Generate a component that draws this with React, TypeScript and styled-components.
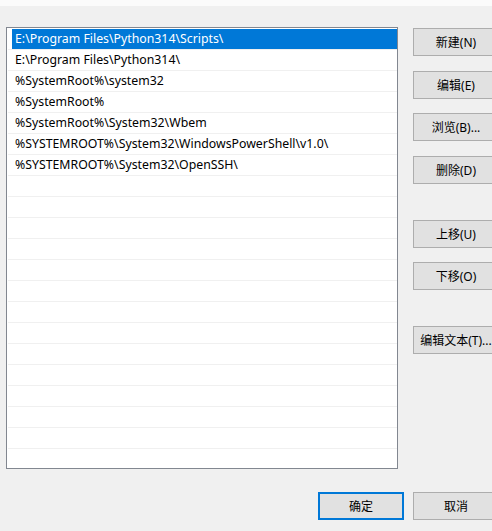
import styled, { createGlobalStyle } from "styled-components";

const paths = [
  "E:\\Program Files\\Python314\\Scripts\\",
  "E:\\Program Files\\Python314\\",
  "%SystemRoot%\\system32",
  "%SystemRoot%",
  "%SystemRoot%\\System32\\Wbem",
  "%SYSTEMROOT%\\System32\\WindowsPowerShell\\v1.0\\",
  "%SYSTEMROOT%\\System32\\OpenSSH\\",
];

const ROW_COUNT = 22;

const sideButtons = [
  { label: "新建(N)", gap: 0 },
  { label: "编辑(E)", gap: 15 },
  { label: "浏览(B)...", gap: 14 },
  { label: "删除(D)", gap: 15 },
  { label: "上移(U)", gap: 36 },
  { label: "下移(O)", gap: 14 },
  { label: "编辑文本(T)...", gap: 36 },
];

export default function App() {
  const rows = Array.from({ length: ROW_COUNT }, (_, i) => paths[i] ?? "");

  return (
    <>
      <GlobalStyle />
      <Dialog>
        <TopStrip />
        <Body>
          <ListBox>
            {rows.map((text, i) => (
              <Row key={i}>
                <Cell $selected={i === 0}>{text}</Cell>
              </Row>
            ))}
          </ListBox>
          <ButtonColumn>
            {sideButtons.map((b) => (
              <DialogButton key={b.label} $gap={b.gap}>
                {b.label}
              </DialogButton>
            ))}
          </ButtonColumn>
        </Body>
        <Footer>
          <DialogButton $default>确定</DialogButton>
          <DialogButton>取消</DialogButton>
        </Footer>
      </Dialog>
    </>
  );
}

const GlobalStyle = createGlobalStyle`
  html, body {
    margin: 0;
    padding: 0;
    background: #f0f0f0;
    overflow: hidden;
  }
  body {
    font-family: "Noto Sans", "Noto Sans CJK SC", sans-serif;
    font-size: 12px;
    color: #000;
  }
`;

const Dialog = styled.div`
  width: 499px;
  height: 531px;
  display: flex;
  flex-direction: column;
`;

const TopStrip = styled.div`
  height: 6px;
  background: #fbfbfb;
`;

const Body = styled.div`
  display: flex;
  align-items: flex-start;
  gap: 15px;
  padding: 21px 0 0 6px;
`;

const ListBox = styled.div`
  box-sizing: border-box;
  width: 392px;
  height: 442px;
  border: 1px solid #828790;
  background: #fff;
  padding-top: 1px;
  overflow: hidden;
`;

const Row = styled.div`
  margin-left: 1px;
  border-bottom: 1px solid #f0f0f0;
`;

const Cell = styled.div<{ $selected?: boolean }>`
  height: 20px;
  line-height: 20px;
  margin-left: 4px;
  padding-left: 3px;
  font-size: 12.3px;
  white-space: nowrap;
  background: ${(p) => (p.$selected ? "#0078d7" : "transparent")};
  color: ${(p) => (p.$selected ? "#fff" : "#000")};
`;

const ButtonColumn = styled.div`
  display: flex;
  flex-direction: column;
  padding-top: 1px;
`;

const DialogButton = styled.button<{ $gap?: number; $default?: boolean }>`
  box-sizing: border-box;
  width: 86px;
  height: 28px;
  margin-top: ${(p) => p.$gap ?? 0}px;
  padding: 0;
  background: #e1e1e1;
  border: ${(p) => (p.$default ? "2px solid #0078d7" : "1px solid #adadad")};
  font: inherit;
  color: #000;
  white-space: nowrap;
  overflow: hidden;
`;

const Footer = styled.div`
  display: flex;
  justify-content: flex-end;
  gap: 9px;
  margin-top: 23px;
`;
